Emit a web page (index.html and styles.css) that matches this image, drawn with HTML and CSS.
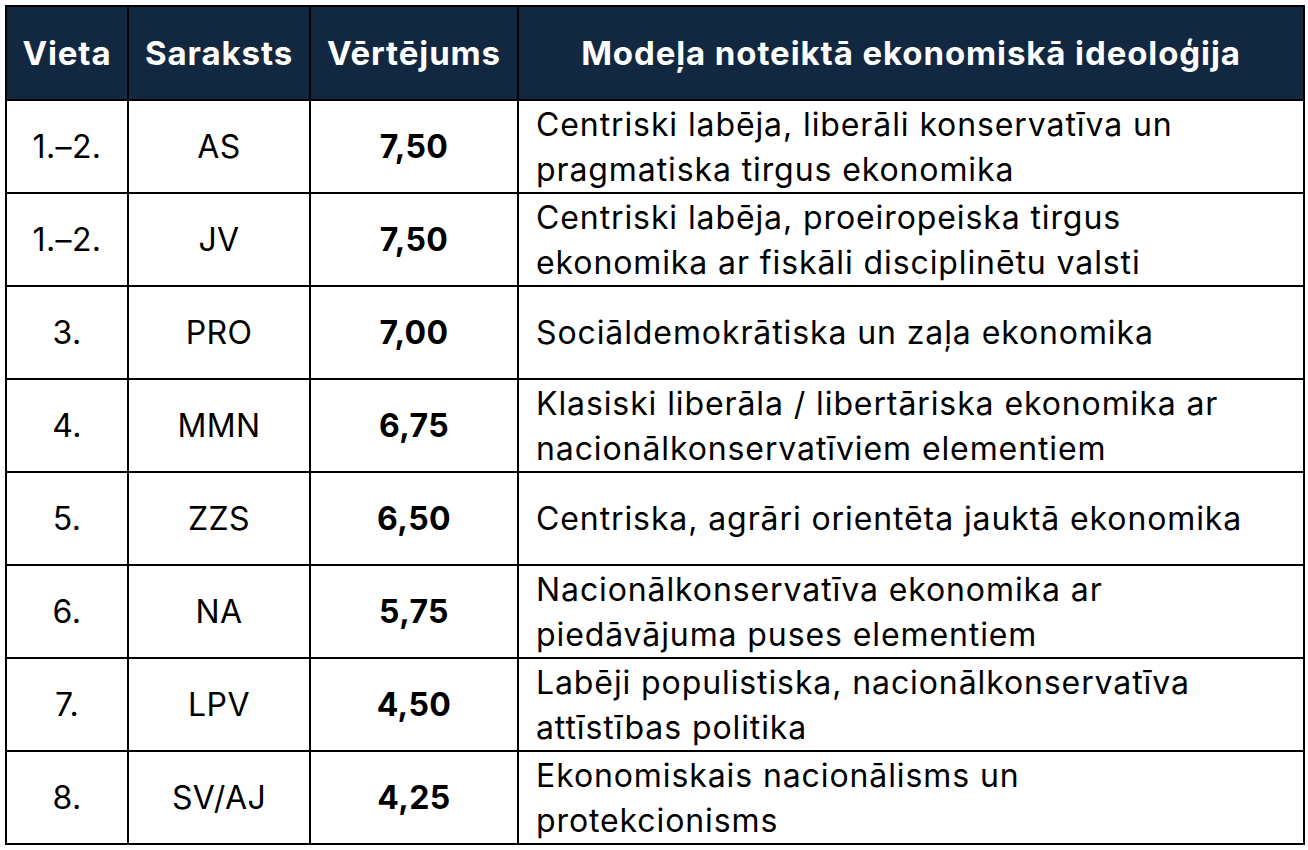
FILE: index.html
```html
<!DOCTYPE html>
<html lang="lv">
<head>
<meta charset="utf-8">
<link rel="stylesheet" href="styles.css">
</head>
<body>
<table class="rank">
  <colgroup>
    <col class="c1"><col class="c2"><col class="c3"><col class="c4">
  </colgroup>
  <thead>
    <tr>
      <th>Vieta</th>
      <th>Saraksts</th>
      <th>Vērtējums</th>
      <th>Modeļa noteiktā ekonomiskā ideoloģija</th>
    </tr>
  </thead>
  <tbody>
    <tr><td class="num">1.–2.</td><td class="num">AS</td><td class="score">7,50</td><td class="desc">Centriski labēja, liberāli konservatīva un<br>pragmatiska tirgus ekonomika</td></tr>
    <tr><td class="num">1.–2.</td><td class="num">JV</td><td class="score">7,50</td><td class="desc">Centriski labēja, proeiropeiska tirgus<br>ekonomika ar fiskāli disciplinētu valsti</td></tr>
    <tr><td class="num">3.</td><td class="num">PRO</td><td class="score">7,00</td><td class="desc">Sociāldemokrātiska un zaļa ekonomika</td></tr>
    <tr><td class="num">4.</td><td class="num">MMN</td><td class="score">6,75</td><td class="desc">Klasiski liberāla / libertāriska ekonomika ar<br>nacionālkonservatīviem elementiem</td></tr>
    <tr><td class="num">5.</td><td class="num">ZZS</td><td class="score">6,50</td><td class="desc">Centriska, agrāri orientēta jauktā ekonomika</td></tr>
    <tr><td class="num">6.</td><td class="num">NA</td><td class="score">5,75</td><td class="desc">Nacionālkonservatīva ekonomika ar<br>piedāvājuma puses elementiem</td></tr>
    <tr><td class="num">7.</td><td class="num">LPV</td><td class="score">4,50</td><td class="desc">Labēji populistiska, nacionālkonservatīva<br>attīstības politika</td></tr>
    <tr><td class="num">8.</td><td class="num">SV/AJ</td><td class="score">4,25</td><td class="desc">Ekonomiskais nacionālisms un<br>protekcionisms</td></tr>
  </tbody>
</table>
</body>
</html>
```

FILE: styles.css
```css
html, body {
  margin: 0;
  padding: 0;
  background: #ffffff;
}
body {
  padding: 5px 0 0 5px;
}
.rank {
  border-collapse: collapse;
  table-layout: fixed;
  width: 1298px;
  border: 2px solid #000;
  font-family: Inter, "Noto Sans", sans-serif;
  color: #000;
}
.c1 { width: 122px; }
.c2 { width: 182px; }
.c3 { width: 208px; }
.c4 { width: 786px; }
.rank th, .rank td {
  border: 2px solid #000;
  padding: 0;
  vertical-align: middle;
}
.rank thead tr { height: 94px; }
.rank tbody tr { height: 93px; }
.rank th {
  background: #112840;
  color: #ffffff;
  font-weight: 700;
  font-size: 33px;
  text-align: center;
  letter-spacing: 0.9px;
}
.rank td.num {
  font-size: 32px;
  text-align: center;
  letter-spacing: 0.4px;
}
.rank td.score {
  font-size: 32px;
  font-weight: 700;
  text-align: center;
  letter-spacing: 0.4px;
}
.rank td.desc {
  font-size: 32px;
  line-height: 45px;
  padding-left: 17px;
  letter-spacing: 0.9px;
}
```
